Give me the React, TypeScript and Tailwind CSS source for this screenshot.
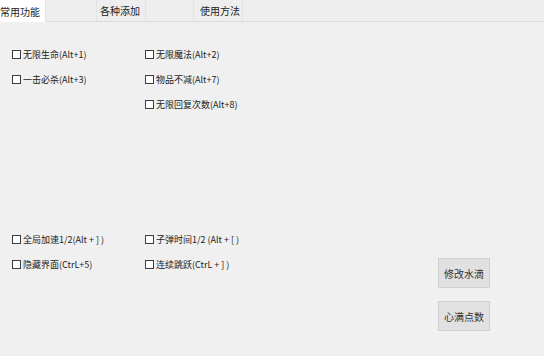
import React from "react";

const font = { fontFamily: '"Noto Sans CJK SC", "Noto Sans", sans-serif' };

function Check({ label }: { label: string }) {
  return (
    <div className="flex h-[25px] items-center">
      <span className="mr-[2px] box-border h-[9px] w-[9px] border border-[#3c3c3c] bg-white" />
      <span className="text-[9px] leading-none text-[#222]">{label}</span>
    </div>
  );
}

export default function App() {
  return (
    <div className="flex h-[356px] w-[544px] flex-col bg-[#f0f0f0]" style={font}>
      <div className="flex h-[22px] border-b border-[#dadada] bg-[#eeeeee]">
        <div className="flex h-[22px] w-[45px] items-center bg-white text-[10px] text-[#222]">常用功能</div>
        <div className="h-[21px] w-[52px] border-x border-[#e2e2e2]" />
        <div className="flex h-[21px] w-[48px] items-center pl-[3px] text-[10px] text-[#222]">各种添加</div>
        <div className="h-[21px] w-[49px] border-x border-[#e2e2e2]" />
        <div className="flex h-[21px] w-[49px] items-center border-r border-[#e2e2e2] pl-[6px] text-[10px] text-[#222]">使用方法</div>
      </div>
      <div className="flex flex-1 flex-col">
        <div className="grid grid-cols-[133px_133px] px-[12px] pt-[20px]">
          <Check label="无限生命(Alt+1)" />
          <Check label="无限魔法(Alt+2)" />
          <Check label="一击必杀(Alt+3)" />
          <Check label="物品不减(Alt+7)" />
          <div />
          <Check label="无限回复次数(Alt+8)" />
        </div>
        <div className="mt-[110px] flex items-start">
          <div className="grid grid-cols-[133px_133px] px-[12px]">
            <Check label="全局加速1/2(Alt + ] )" />
            <Check label="子弹时间1/2 (Alt + [ )" />
            <Check label="隐藏界面(CtrL+5)" />
            <Check label="连续跳跃(CtrL + ] )" />
          </div>
          <div className="ml-auto mr-[54px] mt-[31px] flex flex-col gap-[13px]">
            <button className="h-[30px] w-[52px] border border-[#d0d0d0] bg-[#e1e1e1] text-[10px] text-[#333]">修改水滴</button>
            <button className="h-[30px] w-[52px] border border-[#d0d0d0] bg-[#e1e1e1] text-[10px] text-[#333]">心满点数</button>
          </div>
        </div>
      </div>
    </div>
  );
}
